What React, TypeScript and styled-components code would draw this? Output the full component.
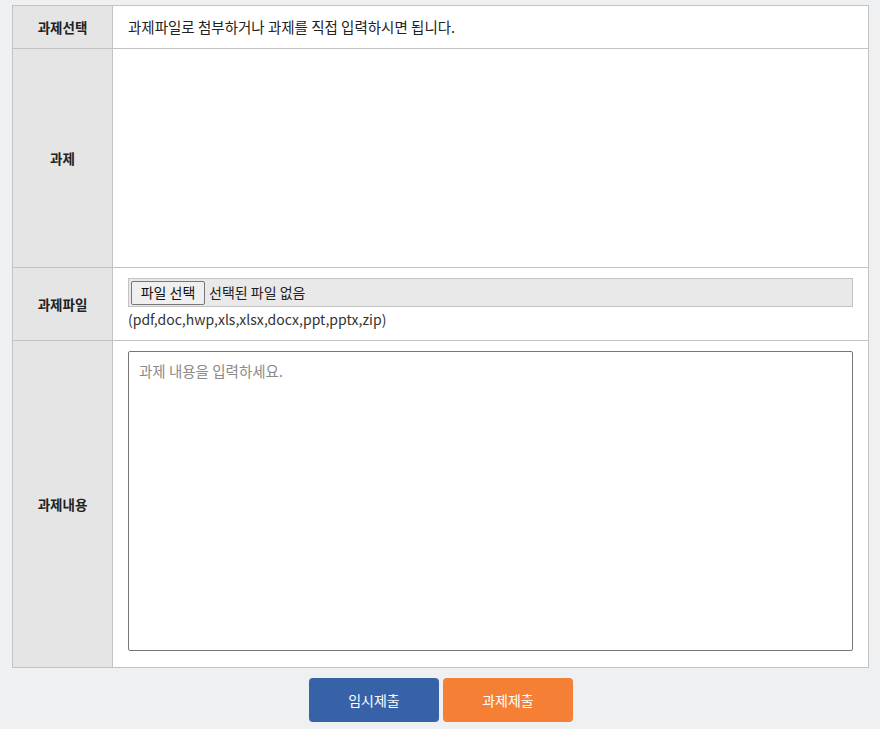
import React from "react";
import styled, { createGlobalStyle } from "styled-components";

const Global = createGlobalStyle`
  html, body { margin: 0; padding: 0; background: #eff0f2; }
  body { font-family: "Noto Sans CJK KR", "Noto Sans", sans-serif; color: #222; }
  * { box-sizing: border-box; }
`;

const Page = styled.div`
  padding: 5px 11px 0 12px;
`;

const Table = styled.table`
  width: 857px;
  border-collapse: collapse;
  background: #fff;
  table-layout: fixed;
`;

const Label = styled.th`
  width: 100px;
  background: #e5e5e5;
  border: 1px solid #c3c3c3;
  font-size: 13.5px;
  font-weight: 700;
  color: #222;
  text-align: center;
  vertical-align: middle;
  padding: 0;
`;

const Cell = styled.td<{ $h: number }>`
  height: ${(p) => p.$h}px;
  border: 1px solid #c3c3c3;
  font-size: 14.5px;
  padding: 10px 15px;
  vertical-align: middle;
  line-height: 1.4;
`;

const FileBox = styled.div`
  display: flex;
  align-items: center;
  gap: 4px;
  height: 29px;
  padding: 0 2px;
  background: #e9e9e9;
  border: 1px solid #c3c3c3;
  font-size: 14px;
`;

const FileButton = styled.span`
  display: inline-flex;
  align-items: center;
  justify-content: center;
  width: 74px;
  height: 24px;
  background: #efefef;
  border: 1px solid #767676;
  border-radius: 2px;
  font-size: 14px;
  color: #111;
`;

const Hint = styled.div`
  margin-top: 3px;
  font-size: 14px;
  color: #333;
`;

const TextArea = styled.textarea`
  display: block;
  width: 100%;
  height: 300px;
  margin-bottom: 6px;
  border: 1px solid #767676;
  border-radius: 2px;
  padding: 8px 10px;
  font-family: "Noto Sans CJK KR", "Noto Sans", sans-serif;
  font-size: 14.5px;
  resize: none;
  &::placeholder { color: #8a8a8a; }
`;

const Buttons = styled.div`
  display: flex;
  justify-content: center;
  gap: 4px;
  padding-top: 10px;
  padding-left: 1px;
`;

const Btn = styled.button<{ $bg: string }>`
  width: 130px;
  height: 44px;
  border: none;
  border-radius: 4px;
  background: ${(p) => p.$bg};
  color: #fff;
  font-family: "Noto Sans CJK KR", "Noto Sans", sans-serif;
  font-size: 14px;
  cursor: pointer;
`;

export default function App() {
  return (
    <Page>
      <Global />
      <Table>
        <tbody>
          <tr>
            <Label>과제선택</Label>
            <Cell $h={43}>과제파일로 첨부하거나 과제를 직접 입력하시면 됩니다.</Cell>
          </tr>
          <tr>
            <Label>과제</Label>
            <Cell $h={219}></Cell>
          </tr>
          <tr>
            <Label>과제파일</Label>
            <Cell $h={73}>
              <FileBox>
                <FileButton>파일 선택</FileButton>
                <span>선택된 파일 없음</span>
              </FileBox>
              <Hint>(pdf,doc,hwp,xls,xlsx,docx,ppt,pptx,zip)</Hint>
            </Cell>
          </tr>
          <tr>
            <Label>과제내용</Label>
            <Cell $h={327}>
              <TextArea placeholder="과제 내용을 입력하세요." />
            </Cell>
          </tr>
        </tbody>
      </Table>
      <Buttons>
        <Btn $bg="#3862a8">임시제출</Btn>
        <Btn $bg="#f47f35">과제제출</Btn>
      </Buttons>
    </Page>
  );
}
